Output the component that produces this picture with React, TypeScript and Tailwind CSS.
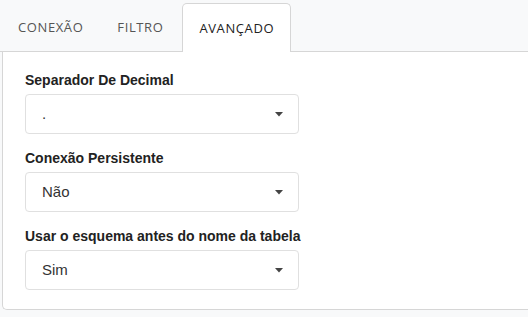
import React from 'react';

const tabs = ['CONEXÃO', 'FILTRO', 'AVANÇADO'];

const fields = [
  { label: 'Separador De Decimal', value: '.' },
  { label: 'Conexão Persistente', value: 'Não' },
  { label: 'Usar o esquema antes do nome da tabela', value: 'Sim' },
];

const Caret = () => (
  <svg width="8" height="5" viewBox="0 0 8 5" className="fill-[#444]">
    <path d="M0 0h8L4 4.5z" />
  </svg>
);

const App = () => {
  return (
    <div className="w-[528px] h-[317px] bg-[#f8f9fa] overflow-hidden font-['Liberation_Sans',Arial,sans-serif]">
      <div className="flex items-end pl-[2px] pt-[3px] border-b border-[#d6d6d6] h-[52px]">
        {tabs.map((t, i) => (
          <div
            key={t}
            className={
              i === 2
                ? "h-[49px] -mb-px flex items-center px-4 ml-[1px] pt-[2px] bg-white border border-b-0 border-[#d6d6d6] rounded-t-[5px] text-[#222] text-[13px] font-['Open_Sans',sans-serif] tracking-[0.6px]"
                : "h-[49px] flex items-center px-4 mr-[2px] pt-[2px] text-[#555] text-[13px] font-['Open_Sans',sans-serif] tracking-[0.6px]"
            }
          >
            {t}
          </div>
        ))}
      </div>
      <div className="ml-[2px] h-[258px] bg-white border border-t-0 border-r-0 border-[#d6d6d6] rounded-bl-[5px] pt-[20px] pl-[22px]">
        {fields.map((f) => (
          <div key={f.label} className="mb-[16px]">
            <div className="text-[14px] font-bold text-[#222] leading-[17px] mb-[5px]">{f.label}</div>
            <div className="w-[274px] h-[40px] border border-[#e0e0e0] rounded-[4px] flex items-center justify-between pl-4 pr-[15px] text-[15px] text-[#333]">
              <span>{f.value}</span>
              <Caret />
            </div>
          </div>
        ))}
      </div>
    </div>
  );
};

export default App;
